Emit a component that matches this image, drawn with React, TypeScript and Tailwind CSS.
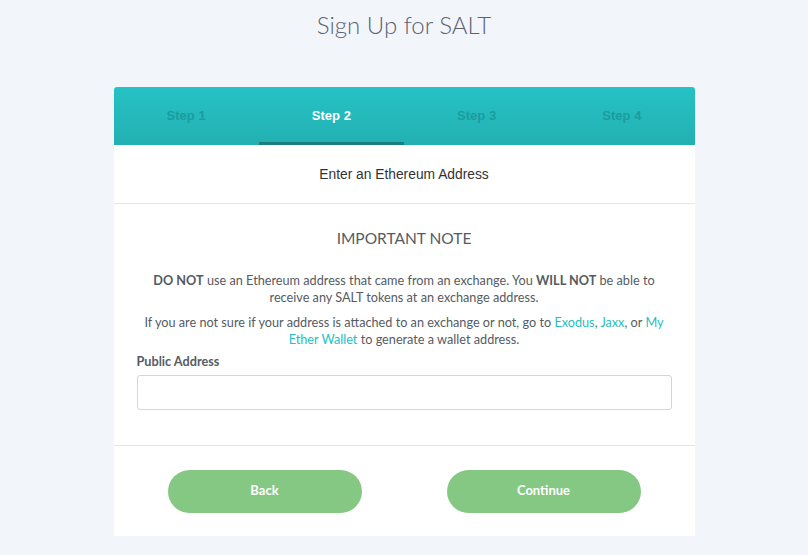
import { useState } from "react";

const steps = ["Step 1", "Step 2", "Step 3", "Step 4"];

export default function App() {
  const [address, setAddress] = useState("");
  const active = 1;

  return (
    <div className="min-h-screen bg-[#f2f5fa] font-['Lato',sans-serif]">
      <h1 className="pt-[9px] text-center text-[24px] font-light leading-[32px] text-[#5b6373]">
        Sign Up for SALT
      </h1>

      <div className="mx-auto mt-[46px] w-[581px] bg-white">
        {/* Steps */}
        <div className="flex h-[58px] rounded-t-[3px] bg-gradient-to-b from-[#26c2c5] to-[#23b0b2] font-['Liberation_Sans',sans-serif]">
          {steps.map((s, i) => (
            <div
              key={s}
              className={
                i === active
                  ? "flex flex-1 items-center justify-center border-b-[3px] border-[#1b7f80] pt-[3px] text-[13px] font-bold text-white"
                  : "flex flex-1 items-center justify-center border-b-[3px] border-transparent pt-[3px] text-[13px] font-bold text-[#1b9c9e]"
              }
            >
              {s}
            </div>
          ))}
        </div>

        <div className="flex h-[59px] items-center justify-center border-b border-[#e3e5e8] pt-[2px] font-['Liberation_Sans',sans-serif] text-[13.8px] text-[#333]">
          Enter an Ethereum Address
        </div>

        {/* Body */}
        <div className="border-b border-[#e3e5e8] px-[23px] pb-[35px] pt-[24px] text-[#555b63]">
          <h2 className="text-center text-[15.5px] leading-[20px] text-[#555b63]">IMPORTANT NOTE</h2>
          <p className="mt-[24px] text-center text-[12.7px] leading-[17px]">
            <b className="font-bold">DO NOT</b> use an Ethereum address that came from an exchange. You{" "}
            <b className="font-bold">WILL NOT</b> be able to
            <br />
            receive any SALT tokens at an exchange address.
          </p>
          <p className="mt-[8px] text-center text-[12.7px] leading-[17px]">
            If you are not sure if your address is attached to an exchange or not, go to{" "}
            <a className="text-[#25bfc2]">Exodus</a>, <a className="text-[#25bfc2]">Jaxx</a>, or{" "}
            <a className="text-[#25bfc2]">My</a>
            <br />
            <a className="text-[#25bfc2]">Ether Wallet</a> to generate a wallet address.
          </p>
          <label className="mt-[5px] block text-[12.7px] font-bold leading-[17px] text-[#555b63]">
            Public Address
          </label>
          <input
            value={address}
            onChange={(e) => setAddress(e.target.value)}
            className="mt-[5px] h-[35px] w-full rounded-[3px] border border-[#d3d5d8] px-3 text-[13px] focus:outline-none"
          />
        </div>

        {/* Buttons */}
        <div className="flex h-[90px] items-center justify-between px-[54px]">
          <button className="h-[43px] w-[194px] rounded-full bg-[#84c884] text-[13px] font-bold text-white">
            Back
          </button>
          <button className="h-[43px] w-[194px] rounded-full bg-[#84c884] text-[13px] font-bold text-white">
            Continue
          </button>
        </div>
      </div>
    </div>
  );
}
